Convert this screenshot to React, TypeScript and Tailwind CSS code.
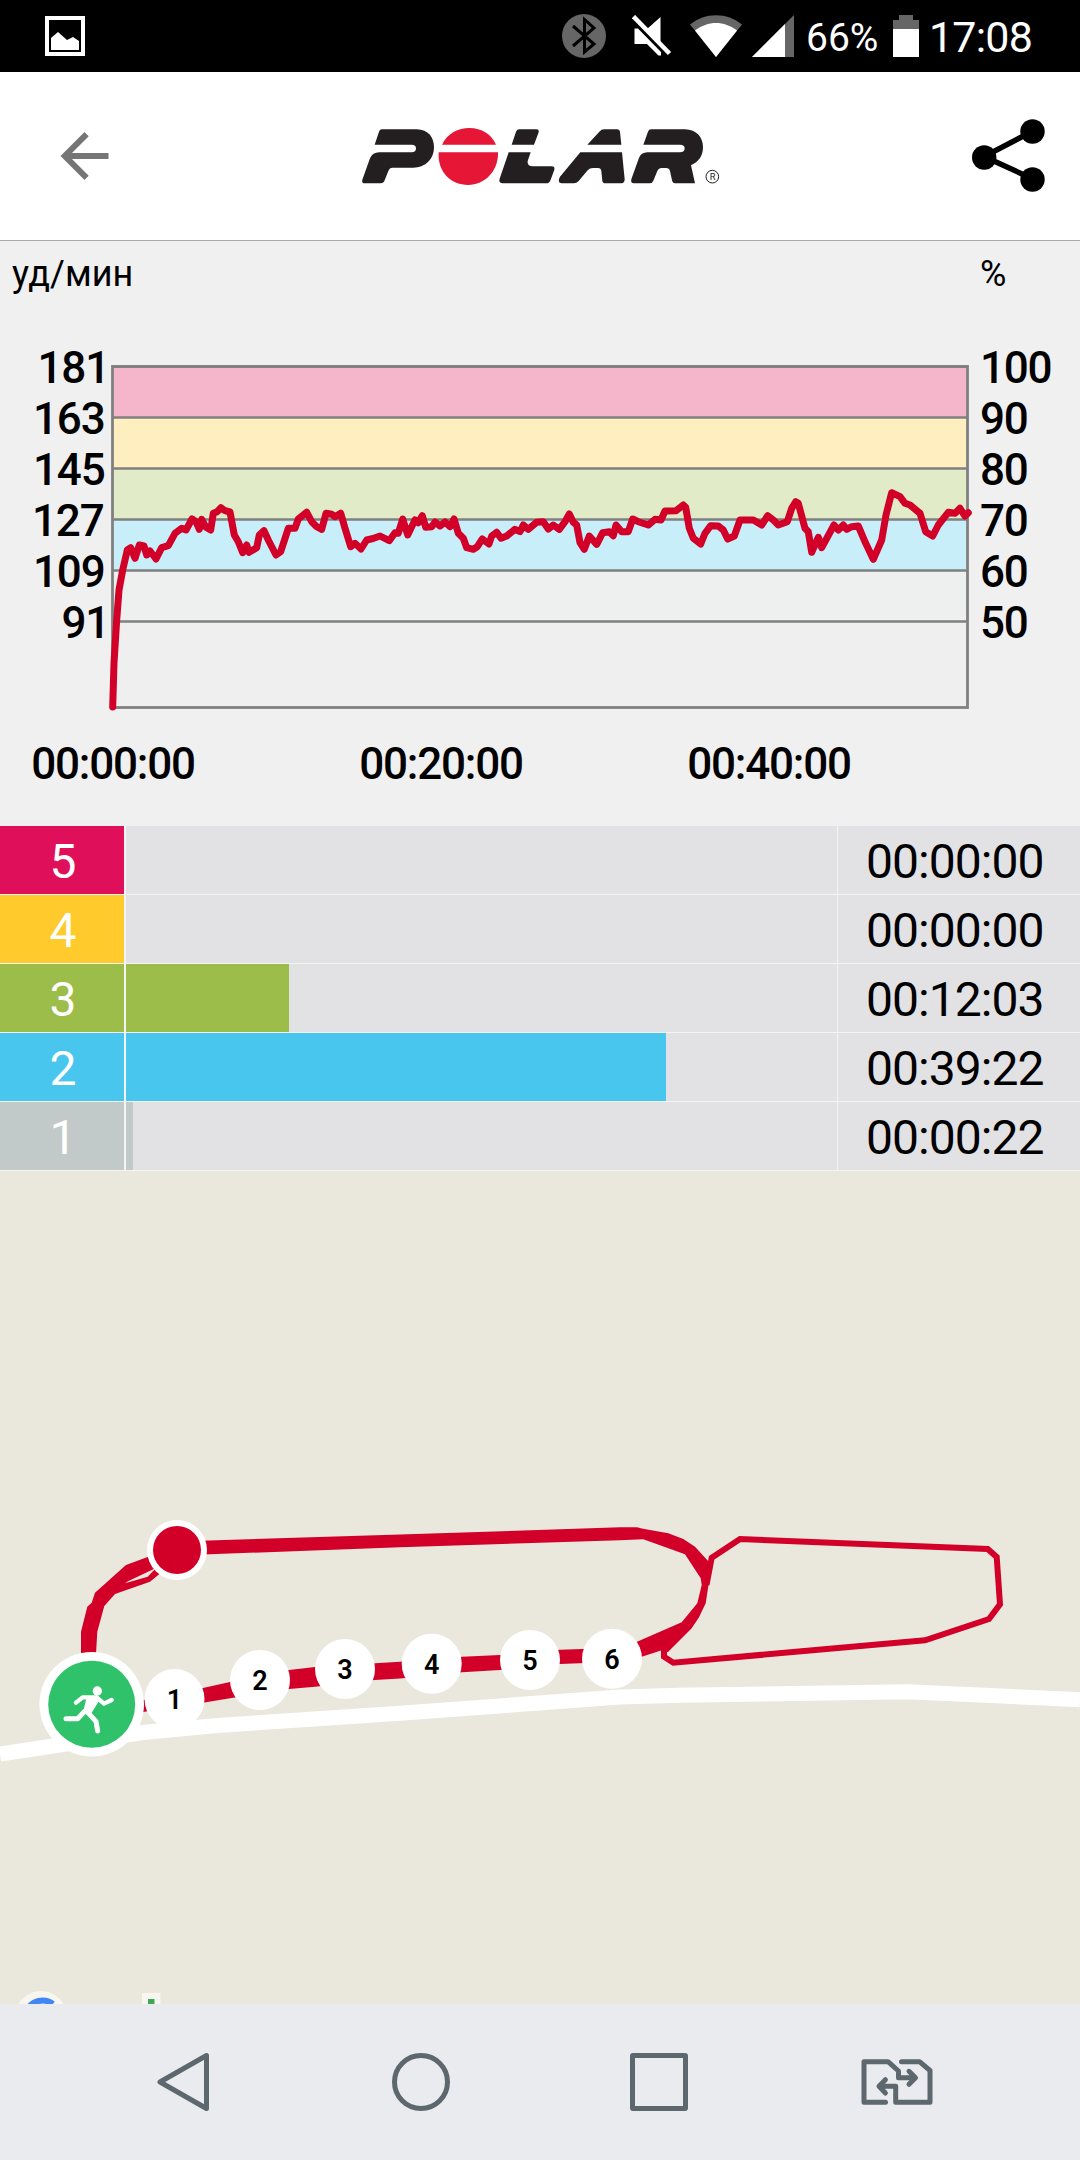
const HR_TRACE =
  "112.7,707 114,663 116.7,620 119,590 122.7,570 127.3,550 130.7,547.7 135,558.3 139.3,545 144,546 146.7,555 150,551 156,559 161.7,547.7 168.3,545.7 175,533.3 181.7,528.3 186,530 192,519 196,521.7 199.3,529.3 201.7,519.3 206,527.3 210.7,530 213.3,513.3 217.3,511.7 221,507.7 225,510.7 230,512 234.3,535 238.3,541.7 242.7,552.7 246.7,545 249,552.3 256.7,547.7 259.3,535 264,530.7 268.3,540 276,555 280.7,551.7 288.3,528.3 295,528.3 298.3,519 303.3,515 306.7,512.3 311.7,521.7 316.7,526.7 321.7,529.3 326,513.3 331.7,514.3 335,516.7 340.7,513.3 345,528.3 350.7,546.7 355,543.3 361,549 366.7,540 373,538.5 380,536 389.3,540.7 395,532.7 398.3,533.3 402.7,519 407.7,535 415,520 418.3,522.7 422.3,515.7 425.7,527.3 431.7,526.7 435,522 440,526 445,522 450,526.7 454,519 458.3,533.3 463.3,538.3 466.7,547.7 473.3,549.3 477.3,546.7 482.3,539 489,544 491.7,536 496.7,532.3 501,538.3 506.7,536 515,529.3 520,531.7 523.3,525 528.3,529.3 536.7,522.3 543.3,521.7 548.3,529 553.3,525 559.3,529.3 565,521.7 569.3,514 573.3,522.3 576.7,525 580,542.7 584.3,549.3 589.3,536 596.7,544.3 602.7,532.7 609.3,531.7 613.3,535.7 616,525 621.7,531.7 628.3,531.7 632.7,519 638.3,521.7 648.3,525 655,519.3 661,520 665,511 676,510.7 683.3,505 685.7,507.3 689.3,528.3 693.3,538.3 700.7,544 705,533.3 710.7,525.7 718.3,526 723.3,530 727.7,539 734.3,536 740,520 753.3,520 761.7,525 767.7,515.7 773.3,520 778.3,525 787.3,521.7 791.7,508.3 795.7,501.7 798.3,503.3 805,528.3 808.3,531.7 811.7,552.3 818.3,537.3 821.7,547.7 834,525 838.3,530 843.3,525 846.7,529.3 851.7,526.7 858.3,526 865.7,543.3 873.3,559.3 881.7,540 886,515 891.7,492.7 900,496.7 905,503.3 910,505 920,513.3 925.7,531.7 932.7,536 938.3,525 948.3,512.3 955,513.3 960,508.3 965,516 968.3,512.7";

const BANDS = [
  { y: 366.5, h: 51, fill: "#f5b6cc" },
  { y: 417.5, h: 51, fill: "#feeec0" },
  { y: 468.5, h: 51, fill: "#e1ebc8" },
  { y: 519.5, h: 51, fill: "#c8eef9" },
  { y: 570.5, h: 51, fill: "#eeefef" },
  { y: 621.5, h: 86, fill: "#efefef" },
];

const GRID = [
  { y: 366.5, bpm: 181, right: 109, percent: 100 },
  { y: 417.5, bpm: 163, right: 104.5, percent: 90 },
  { y: 468.5, bpm: 145, right: 104.5, percent: 80 },
  { y: 519.5, bpm: 127, right: 103.5, percent: 70 },
  { y: 570.5, bpm: 109, right: 104.5, percent: 60 },
  { y: 621.5, bpm: 91, right: 109, percent: 50 },
];

const TIMES = [
  { x: 113, label: "00:00:00" },
  { x: 441, label: "00:20:00" },
  { x: 769, label: "00:40:00" },
];

const ZONES = [
  { zone: 5, color: "bg-[#e00f5a]", width: 0, time: "00:00:00" },
  { zone: 4, color: "bg-[#ffca2b]", width: 0, time: "00:00:00" },
  { zone: 3, color: "bg-[#9cbd4a]", width: 163, time: "00:12:03" },
  { zone: 2, color: "bg-[#48c6ee]", width: 540, time: "00:39:22" },
  { zone: 1, color: "bg-[#c1cac8]", width: 7, time: "00:00:22" },
];

const KM_MARKERS = [
  { n: 1, x: 174.5, y: 1699 },
  { n: 2, x: 260, y: 1680 },
  { n: 3, x: 345, y: 1669 },
  { n: 4, x: 431.7, y: 1663.7 },
  { n: 5, x: 530, y: 1660 },
  { n: 6, x: 612, y: 1658.7 },
];

function StatusBar() {
  return (
    <div className="flex h-[72px] items-center bg-black pl-[45px] text-white">
      <svg width="40" height="40" viewBox="0 0 40 40">
        <path d="M2 2h36v36H2z" fill="none" stroke="#fff" strokeWidth="4" />
        <path d="M6 34V22l7-6 9 8 6-3 6 4v9z" fill="#fff" />
      </svg>

      <svg className="ml-[477px]" width="44" height="44" viewBox="0 0 44 44">
        <circle cx="22" cy="22" r="22" fill="#666" />
        <path d="M11 12l21 18-9.500 8V5.500L32 14 11 32" fill="none" stroke="#000" strokeWidth="3" />
      </svg>
      <svg className="ml-[26px]" width="40" height="42" viewBox="0 0 40 42">
        <path d="M28.500 2v26L14.500 14.500zM2.500 13.500H6L29 37v3.500h-2.500L15 29H2.500z" fill="#fff" />
        <path d="M1.500 1.500L37.500 38.500" stroke="#fff" strokeWidth="4.500" />
      </svg>
      <svg className="ml-[18px]" width="52" height="42" viewBox="0 0 52 42">
        <path d="M0 9.500C15-3 37-3 52 9.500L26 42z" fill="#666" />
        <path d="M5 15.500C18 5.500 34 5.500 47 15.500L26 42z" fill="#fff" />
      </svg>
      <svg className="ml-[10px]" width="42" height="42" viewBox="0 0 42 42">
        <path d="M42 0v42H0z" fill="#666" />
        <path d="M33 9v33H0z" fill="#fff" />
      </svg>
      <span className="ml-[12px] w-[72px] pt-[4px] text-[39px] leading-none">66%</span>
      <svg className="ml-[15px]" width="26" height="42" viewBox="0 0 26 42">
        <path d="M6 0h14v5h6v37H0V5h6z" fill="#666" />
        <path d="M0 14h26v28H0z" fill="#fff" />
      </svg>
      <span className="ml-[10px] pt-[3px] text-[43px] leading-none tracking-[-0.8px]">17:08</span>
    </div>
  );
}

function PolarLogo() {
  return (
    <svg width="400" height="90" viewBox="0 0 1200 270" fill="#231f20">
      <path d="M126 55H230C265 55 282 80 282 108C282 145 255 170 220 170H158Q148 170 145 180L134 208Q131 217 122 217H75Q64 217 67 206L90 142Q97 124 118 124H215Q228 124 228 112Q228 101 215 101H104L117 62Q119 55 126 55Z" />
      <path d="M306 101C322 67 355 51 388 51C425 51 455 70 468 101ZM296 124H474C476 180 435 222 384 222C335 222 292 185 296 124Z" fill="#e51636" />
      <path d="M515 101L528 62Q531 55 538 55H590Q598 55 596 64L582 101ZM506 124H572L563 150Q561 166 578 166H635Q645 166 643 176L632 206Q629 217 618 217H488Q475 217 479 203Z" />
      <path d="M742 101L778 62Q784 55 793 55H831Q839 55 840 63L844 101ZM721 124H846L854 205Q854 217 844 217H797Q788 217 787 209L784 180Q783 171 774 171H759Q749 171 743 178L716 210Q710 217 701 217H665Q650 215 660 197Z" />
      <path d="M910 101L924 62Q926 55 934 55H1035C1070 55 1089 80 1089 108C1089 135 1076 152 1053 163L1065 217H1005Q998 217 996 208L990 180Q988 171 978 171H965Q956 171 952 180L940 209Q937 217 928 217H882Q871 217 874 205L896 143Q903 124 922 124H1020Q1034 124 1034 112Q1034 101 1020 101Z" />
      <circle cx="1117" cy="197" r="19" fill="none" stroke="#231f20" strokeWidth="3" />
      <text x="1117.500" y="207" fontSize="28" textAnchor="middle">
        R
      </text>
    </svg>
  );
}

function Header() {
  return (
    <header className="flex h-[169px] items-center border-b border-[#a9a9a9] bg-white pr-[35px] pl-[48px]">
      <svg width="73" height="72" viewBox="0 0 24 24" fill="#757575">
        <path d="M20 11H7.830l5.590-5.590L12 4l-8 8 8 8 1.410-1.410L7.830 13H20v-2z" />
      </svg>
      <div className="ml-[219px] pb-[1px]">
        <PolarLogo />
      </div>
      <svg className="ml-auto" width="73" height="74" viewBox="0 0 73 74">
        <path d="M60 13L12 38l48 22" fill="none" stroke="#000" strokeWidth="5.500" transform="translate(0 -.5)" />
        <circle cx="60.500" cy="12.500" r="12.200" />
        <circle cx="12.200" cy="38.500" r="12.200" />
        <circle cx="60.500" cy="60.500" r="12.200" />
      </svg>
    </header>
  );
}

function HeartRateChart() {
  return (
    <svg className="block bg-[#f0f0f0]" width="1080" height="585" viewBox="0 241 1080 585">
      <text x="12" y="285.500" fontSize="36" letterSpacing="0.1">уд/мин</text>
      <text x="980" y="285.500" fontSize="36">%</text>

      {BANDS.map((band) => (
        <rect key={band.y} x="112.500" y={band.y} width="855" height={band.h} fill={band.fill} />
      ))}
      {GRID.map((line) => (
        <path key={line.y} d={`M112 ${line.y}H968`} stroke="#808080" strokeWidth="2.700" />
      ))}
      <rect x="112.500" y="366.500" width="855" height="341" fill="none" stroke="#808080" strokeWidth="2.800" />
      <polyline points={HR_TRACE} fill="none" stroke="#d20028" strokeWidth="7" strokeLinejoin="round" strokeLinecap="round" />

      <g fontSize="44" fontWeight="500" letterSpacing="-1.2">
        {GRID.map((line) => (
          <g key={line.bpm}>
            <text x={line.right} y={line.y + 16} textAnchor="end">{line.bpm}</text>
            <text x="980" y={line.y + 16}>{line.percent}</text>
          </g>
        ))}
        {TIMES.map((time) => (
          <text key={time.x} x={time.x} y="778.500" textAnchor="middle">{time.label}</text>
        ))}
      </g>
    </svg>
  );
}

function ZoneTable() {
  return (
    <div className="flex flex-col bg-[#f4f4f4]">
      {ZONES.map((z) => (
        <div key={z.zone} className="mb-px flex h-[68px] text-5xl leading-none">
          <div className={`flex w-[124px] items-center justify-center pt-[4px] pl-[2px] text-white ${z.color}`}>{z.zone}</div>
          <div className="ml-[2px] w-[711px] bg-[#e2e2e4]">
            <div className={`h-full ${z.color}`} style={{ width: z.width }} />
          </div>
          <div className="ml-px flex flex-1 items-center bg-[#e2e2e4] pt-[4px] pl-[28px] tracking-[-0.95px] text-black">{z.time}</div>
        </div>
      ))}
    </div>
  );
}

function RouteMap() {
  return (
    <svg className="block bg-[#eae8dd]" width="1080" height="833" viewBox="0 1171 1080 833">
      <path d="M0 1754L92 1740 143 1732.500 217 1725.500 400 1713.300 620 1697 680 1695.200 907 1691.700 1080 1699.700" fill="none" stroke="#fff" strokeWidth="15" />

      <g fill="#d20028">
        {/* left bend */}
        <path d="M81 1654V1631.700L87.300 1606.700 91.700 1602.700 95 1592.700 126 1565 148.300 1556.700 177 1550 153.300 1569.300 128 1581.300 125 1583.300 147.700 1576.700 156 1568 163 1571 150 1581.700 115 1594 104.300 1606 97.300 1631.700 96 1654Z" />
        {/* upper straight and right bend */}
        <path d="M177 1541.500L400 1534.500 620 1527.300H637L643 1528.700 668.300 1533.300 683.300 1539 695 1546.700 708.500 1561.500 711.300 1567 705.700 1603.300 699 1617.300 691.700 1628.300 668 1652 661 1650.500 641.700 1656.700 612 1665V1652L637 1641.700 681.700 1622.300 697.300 1603.300 701.700 1585 700.700 1578.300 685 1554.300 643.300 1539.300 620 1540.300 400 1547.300 177 1555.500Z" />
        {/* lower straight */}
        <path d="M100 1709L143 1700 203 1688 230 1682 289 1670 315 1667 375 1663.300 400 1661.700 462 1656.700 500 1655 560 1649.700 612 1648V1662L560 1664 500 1670 462 1672.300 400 1678.500 375 1680 315 1686.700 289 1689 230 1698.300 203 1702.700 143 1712Z" />
      </g>
      <path
        d="M706.500 1585L711.700 1557.700 740 1539 987.700 1549 996.700 1557 1000 1604.300 989 1619 925 1640.300 673.300 1662.700 664 1656.700V1650L690 1623"
        fill="none"
        stroke="#d20028"
        strokeWidth="6"
      />

      <circle cx="177" cy="1550" r="30" fill="#fff" />
      <circle cx="177" cy="1550" r="24" fill="#d20028" />

      {KM_MARKERS.map((m) => (
        <g key={m.n}>
          <circle cx={m.x} cy={m.y} r="30" fill="#fff" />
          <text x={m.x} y={m.y + 10} fontSize="27" fontWeight="600" textAnchor="middle">{m.n}</text>
        </g>
      ))}

      <circle cx="91.700" cy="1704.300" r="52.300" fill="#fff" />
      <circle cx="91.700" cy="1704.300" r="43.500" fill="#2fc26b" />
      <g transform="translate(0 1500) scale(.33333)" fill="none" stroke="#fff" strokeWidth="15" strokeLinecap="round" strokeLinejoin="round">
        <circle cx="292" cy="573" r="14" fill="#fff" stroke="none" />
        <path d="M228 608L248 592H290L312 611 335 600" strokeWidth="13" />
        <path d="M264 592L294 600 271 637 254 634Z" fill="#fff" strokeWidth="8" />
        <path d="M254 634L233 656H198" />
        <path d="M263 637L288 664 293 693" />
      </g>

      <circle cx="41" cy="2017" r="26" fill="#f7f6f1" />
      <path d="M27 2010A17.500 17.500 0 0 1 53 2004" fill="none" stroke="#4285f4" strokeWidth="6" />
      <path d="M142 1993h18.500v11H142z" fill="#f7f6f1" />
      <path d="M148 1999h6.500v5H148z" fill="#43a657" />
    </svg>
  );
}

function NavBar() {
  return (
    <nav className="flex h-[156px] items-center bg-[#e9ebef] px-[64px]">
      <div className="flex flex-1 justify-center">
        <svg width="52" height="60" viewBox="0 0 52 60" fill="none" stroke="#5c676e" strokeWidth="5" strokeLinejoin="round">
          <path d="M3 30L49.500 3.500V56.500Z" />
        </svg>
      </div>
      <div className="flex flex-1 justify-center">
        <div className="size-[58px] rounded-full border-5 border-[#5c676e]" />
      </div>
      <div className="flex flex-1 justify-center">
        <div className="size-[58px] rounded-[3px] border-5 border-[#5c676e]" />
      </div>
      <div className="flex flex-1 justify-center">
        <svg width="72" height="48" viewBox="861 2058 72 48" fill="none" stroke="#5c676e" strokeWidth="5" strokeLinejoin="round" strokeLinecap="round">
          <path d="M885.500 2102.300H864V2061.700H888L898.500 2071V2077.700H914M909 2071.300L915.500 2077.700 909 2084.300" />
          <path d="M901.500 2061.700H919.500L930 2070.500V2102.300H895.700V2086.300H880M885.400 2079.700L879 2086.300 885.400 2093" />
        </svg>
      </div>
    </nav>
  );
}

export default function App() {
  return (
    <div className="flex h-[2160px] w-[1080px] flex-col overflow-hidden bg-white font-[Roboto,sans-serif] text-black">
      <StatusBar />
      <Header />
      <HeartRateChart />
      <ZoneTable />
      <RouteMap />
      <NavBar />
    </div>
  );
}
